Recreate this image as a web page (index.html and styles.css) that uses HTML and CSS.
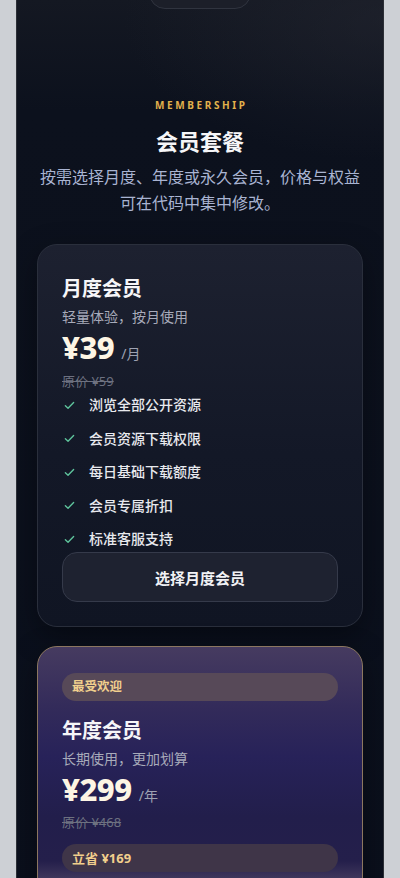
FILE: index.html
```html
<!DOCTYPE html>
<html lang="zh-CN">
<head>
<meta charset="utf-8">
<meta name="viewport" content="width=device-width, initial-scale=1">
<title>会员套餐</title>
<link rel="stylesheet" href="styles.css">
</head>
<body>
<div class="phone">
  <div class="top-pill"></div>
  <section class="membership">
    <div class="eyebrow">MEMBERSHIP</div>
    <h2 class="title">会员套餐</h2>
    <p class="desc">按需选择月度、年度或永久会员，价格与权益<br>可在代码中集中修改。</p>

    <div class="plans">
      <div class="plan">
        <h3 class="plan-name">月度会员</h3>
        <p class="plan-sub">轻量体验，按月使用</p>
        <div class="price"><span class="amount">¥39</span><span class="unit">/月</span></div>
        <div class="orig">原价 ¥59</div>
        <ul class="features">
          <li><svg class="check" viewBox="0 0 12 12"><path d="M1.5 6.3 4.4 9 10.5 2.8"/></svg>浏览全部公开资源</li>
          <li><svg class="check" viewBox="0 0 12 12"><path d="M1.5 6.3 4.4 9 10.5 2.8"/></svg>会员资源下载权限</li>
          <li><svg class="check" viewBox="0 0 12 12"><path d="M1.5 6.3 4.4 9 10.5 2.8"/></svg>每日基础下载额度</li>
          <li><svg class="check" viewBox="0 0 12 12"><path d="M1.5 6.3 4.4 9 10.5 2.8"/></svg>会员专属折扣</li>
          <li><svg class="check" viewBox="0 0 12 12"><path d="M1.5 6.3 4.4 9 10.5 2.8"/></svg>标准客服支持</li>
        </ul>
        <button class="btn">选择月度会员</button>
      </div>

      <div class="plan plan-featured">
        <div class="tag">最受欢迎</div>
        <h3 class="plan-name">年度会员</h3>
        <p class="plan-sub">长期使用，更加划算</p>
        <div class="price"><span class="amount">¥299</span><span class="unit">/年</span></div>
        <div class="orig">原价 ¥468</div>
        <div class="tag save">立省 ¥169</div>
      </div>
    </div>
  </section>
</div>
</body>
</html>
```
FILE: styles.css
```css
* { box-sizing: border-box; }

html, body {
  margin: 0;
  padding: 0;
}

body {
  background: #cdd0d5;
  font-family: "Noto Sans", "Noto Sans CJK SC", sans-serif;
  color: #f3f4f7;
}

.phone {
  width: 368px;
  margin: 0 auto;
  min-height: 878px;
  border-left: 1px solid #2c2f36;
  border-right: 1px solid #2c2f36;
  background:
    radial-gradient(ellipse 260px 140px at 100% 20px, rgba(40, 42, 52, 0.45), rgba(40, 42, 52, 0) 100%),
    linear-gradient(180deg, #141822 0px, #0c111d 110px, #0a0f1c 100%);
  overflow: hidden;
  padding: 0 20px 40px;
}

.top-pill {
  width: 102px;
  height: 40px;
  margin: -31px auto 0;
  border-radius: 16px;
  background: #1c1f29;
  border: 1px solid #30343f;
}

.membership {
  display: flex;
  flex-direction: column;
  align-items: stretch;
}

.eyebrow {
  margin-top: 88px;
  text-align: center;
  font-size: 10px;
  line-height: 16px;
  font-weight: 700;
  letter-spacing: 2.6px;
  color: #e2b24c;
  padding-left: 2.6px;
}

.title {
  margin: 13px 0 0;
  text-align: center;
  font-size: 22px;
  line-height: 30px;
  font-weight: 700;
  color: #f6f6f8;
}

.desc {
  margin: 8px 0 0;
  text-align: center;
  font-size: 16px;
  line-height: 26px;
  color: #a9b4d2;
  white-space: nowrap;
}

.plans {
  margin-top: 28px;
  display: flex;
  flex-direction: column;
  gap: 19px;
}

.plan {
  border-radius: 20px;
  border: 1px solid #2a2f3c;
  background: linear-gradient(180deg, #1d2130 0%, #131827 55%, #101523 100%);
  padding: 30px 24px 24px;
  box-shadow: 0 10px 30px rgba(0, 0, 0, 0.35);
  display: flex;
  flex-direction: column;
}

.plan-name {
  margin: 0;
  font-size: 20px;
  line-height: 28px;
  font-weight: 700;
  color: #f6f6f8;
}

.plan-sub {
  margin: 4px 0 0;
  font-size: 14px;
  line-height: 20px;
  color: #a8abba;
}

.price {
  margin-top: 2px;
  display: flex;
  align-items: baseline;
  gap: 7px;
}

.amount {
  font-family: "Noto Sans", sans-serif;
  font-size: 31px;
  line-height: 36px;
  font-weight: 800;
  color: #fdf5e4;
  letter-spacing: -0.5px;
}

.unit {
  font-size: 14px;
  color: #9ea2b2;
}

.orig {
  margin-top: 6px;
  font-size: 13px;
  line-height: 20px;
  color: #6d7180;
  text-decoration: line-through;
}

.features {
  list-style: none;
  margin: 4px 0 0;
  padding: 0;
  display: flex;
  flex-direction: column;
  gap: 13.5px;
}

.features li {
  display: flex;
  align-items: center;
  font-size: 14px;
  line-height: 20px;
  font-weight: 500;
  color: #e8e9ee;
}

.check {
  width: 11px;
  height: 11px;
  margin: 0 14px 0 2px;
  fill: none;
  stroke: #5fc59d;
  stroke-width: 1.5;
  stroke-linecap: round;
  stroke-linejoin: round;
}

.btn {
  margin-top: 3px;
  height: 50px;
  border-radius: 15px;
  border: 1px solid #353a4a;
  background: #1e2230;
  color: #f1f2f5;
  font-family: "Noto Sans CJK SC", sans-serif;
  font-size: 15px;
  font-weight: 700;
}

.plan-featured {
  border-color: #8c7760;
  padding-top: 26px;
  padding-bottom: 60px;
  background: linear-gradient(180deg, #463b60 0px, #332b5a 60px, #272259 110px, #221e4b 170px, #241f4b 214px, #3a3258 228px, #4d4466 240px, #2a2450 300px, #1a1836 100%);
}

.tag {
  height: 28px;
  border-radius: 14px;
  background: #574958;
  color: #f1cf8d;
  font-size: 12.5px;
  font-weight: 700;
  line-height: 28px;
  padding: 0 10px;
}

.plan-featured .plan-name {
  margin-top: 16px;
}

.plan-featured .orig {
  margin-top: 5px;
}

.tag.save {
  margin-top: 12px;
  background: #3f3548;
  font-size: 13px;
}
```
